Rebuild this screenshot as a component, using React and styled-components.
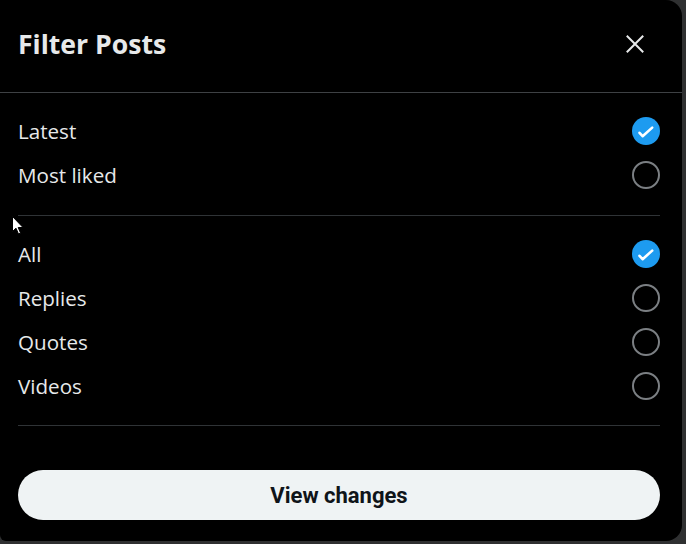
import React, { useState } from "react";
import styled, { createGlobalStyle } from "styled-components";

const Global = createGlobalStyle`
  html, body { margin: 0; padding: 0; }
  body {
    background: #2f3031;
    width: 686px;
    height: 544px;
    overflow: hidden;
    font-family: "Open Sans", "Noto Sans", sans-serif;
  }
`;

const Modal = styled.div`
  position: relative;
  box-sizing: border-box;
  width: 682px;
  height: 541px;
  background: #000;
  border-radius: 0 16px 16px 6px;
  display: flex;
  flex-direction: column;
  color: #e7e9ea;
`;

const Header = styled.header`
  box-sizing: border-box;
  height: 93px;
  padding: 0 29px 4px 18px;
  display: flex;
  align-items: center;
  justify-content: space-between;
  border-bottom: 1px solid #3e4144;
`;

const Title = styled.h2`
  margin: 0;
  font-family: "Open Sans", sans-serif;
  font-weight: 700;
  font-size: 26.6px;
  line-height: 32px;
  color: #e7e9ea;
`;

const CloseButton = styled.button`
  width: 36px;
  height: 36px;
  border: none;
  border-radius: 50%;
  background: transparent;
  display: flex;
  align-items: center;
  justify-content: center;
  padding: 0;
  cursor: pointer;
  color: #e7e9ea;
`;

const Section = styled.section`
  margin: 0 22px 0 18px;
  padding: ${(p) => p.$pt}px 0 ${(p) => p.$pb}px;
  border-bottom: 1px solid #2f3336;
  display: flex;
  flex-direction: column;
`;

const Row = styled.label`
  height: 44px;
  display: flex;
  align-items: center;
  justify-content: space-between;
  cursor: pointer;
`;

const RowText = styled.span`
  font-family: "Open Sans", sans-serif;
  font-size: 20.6px;
  font-weight: 400;
  color: #e7e9ea;
`;

const Circle = styled.span`
  box-sizing: border-box;
  width: 28px;
  height: 28px;
  border-radius: 50%;
  display: flex;
  align-items: center;
  justify-content: center;
  background: ${(p) => (p.$checked ? "#1d9bf0" : "transparent")};
  border: ${(p) => (p.$checked ? "none" : "2px solid #7b7f83")};
`;

const Footer = styled.div`
  margin-top: 44px;
  padding: 0 22px 0 18px;
`;

const PrimaryButton = styled.button`
  width: 100%;
  height: 50px;
  border: none;
  border-radius: 9999px;
  background: #eff3f4;
  color: #0f1419;
  font-family: Roboto, "Open Sans", sans-serif;
  font-weight: 700;
  font-size: 22px;
  cursor: pointer;
`;

const Cursor = styled.svg`
  position: absolute;
  left: 12px;
  top: 216px;
  pointer-events: none;
`;

function Check({ checked }) {
  return (
    <Circle $checked={checked}>
      {checked && (
        <svg width="28" height="28" viewBox="0 0 28 28">
          <path
            d="M7.5 15.8 L10.6 19.2 L20.2 10.6"
            fill="none"
            stroke="#fff"
            strokeWidth="2.6"
            strokeLinecap="round"
            strokeLinejoin="round"
          />
        </svg>
      )}
    </Circle>
  );
}

export default function App() {
  const [sort, setSort] = useState("Latest");
  const [kind, setKind] = useState("All");
  const sorts = ["Latest", "Most liked"];
  const kinds = ["All", "Replies", "Quotes", "Videos"];
  return (
    <>
      <Global />
      <Modal>
        <Header>
          <Title>Filter Posts</Title>
          <CloseButton aria-label="Close">
            <svg width="18" height="18" viewBox="0 0 18 18">
              <path
                d="M1.5 1.5 L16.5 16.5 M16.5 1.5 L1.5 16.5"
                stroke="currentColor"
                strokeWidth="2"
                strokeLinecap="square"
              />
            </svg>
          </CloseButton>
        </Header>
        <Section $pt={16} $pb={18}>
          {sorts.map((s) => (
            <Row key={s} onClick={() => setSort(s)}>
              <RowText>{s}</RowText>
              <Check checked={sort === s} />
            </Row>
          ))}
        </Section>
        <Section $pt={16} $pb={17}>
          {kinds.map((k) => (
            <Row key={k} onClick={() => setKind(k)}>
              <RowText>{k}</RowText>
              <Check checked={kind === k} />
            </Row>
          ))}
        </Section>
        <Footer>
          <PrimaryButton>View changes</PrimaryButton>
        </Footer>
        <Cursor width="12" height="19" viewBox="0 0 12 19">
          <path
            d="M0.5 0.5 L0.5 15.5 L4 12.2 L6.5 18 L8.6 17.1 L6.2 11.5 L11 11.5 Z"
            fill="#fff"
            stroke="#000"
            strokeWidth="1"
          />
        </Cursor>
      </Modal>
    </>
  );
}
